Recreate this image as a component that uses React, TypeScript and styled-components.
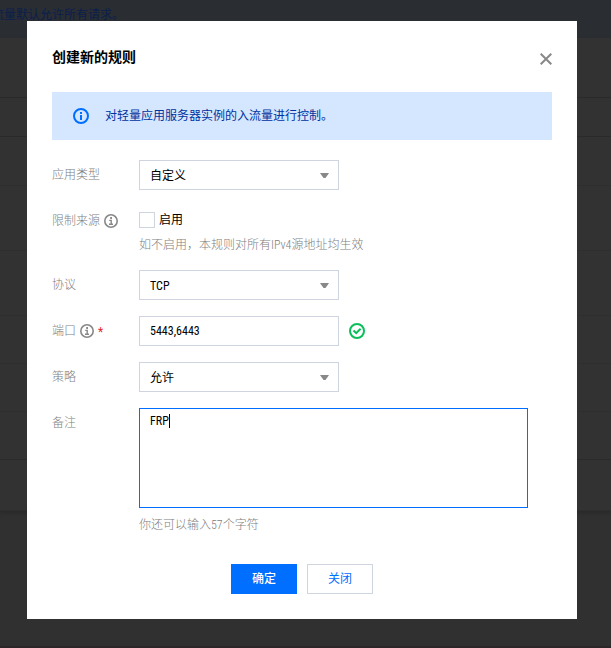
import React, { useState } from "react";
import styled, { createGlobalStyle } from "styled-components";

const GlobalStyle = createGlobalStyle`
  *, *::before, *::after { box-sizing: border-box; }
  body {
    margin: 0;
    background: #303030;
    color: #000;
    font: 12px/20px "Roboto Condensed", "Noto Sans CJK SC", sans-serif;
  }
  button, input, select, textarea { font: inherit; color: inherit; margin: 0; }
`;

const Page = styled.div`
  position: relative;
  min-height: 100vh;
  overflow: hidden;
  display: flex;
  flex-direction: column;
`;

const PageNotice = styled.div`
  height: 38px;
  padding-top: 5px;
  background: #2a2e33;
  color: #0b1e4c;
  white-space: nowrap;
`;

const NoticeText = styled.span`
  margin-left: -8px;
`;

const RuleList = styled.div`
  background: #323232;
  box-shadow: 0 2px 3px #292929;
`;

const RuleRow = styled.div<{ $height: number; $strong?: boolean }>`
  height: ${(p) => p.$height}px;
  border-bottom: 1px solid ${(p) => (p.$strong ? "#292a2b" : "#2e2e2f")};
`;

const BottomBar = styled.div`
  margin-top: auto;
  height: 2px;
  background: #2d2629;
`;

const Overlay = styled.div`
  position: absolute;
  inset: 0;
  display: flex;
  justify-content: center;
  align-items: flex-start;
  padding: 21px 34px 21px 27px;
`;

const Dialog = styled.form`
  flex: 1;
  max-width: 550px;
  padding: 25px;
  background: #fff;
`;

const Header = styled.header`
  display: flex;
  justify-content: space-between;
  align-items: flex-start;
  height: 46px;
`;

const Title = styled.h1`
  margin: 0;
  font-size: 14px;
  line-height: 22px;
  font-weight: 700;
`;

const CloseButton = styled.button`
  display: flex;
  margin-top: 7px;
  padding: 0;
  border: 0;
  background: none;
  color: #888;
  cursor: pointer;
`;

const Notice = styled.div`
  display: flex;
  align-items: center;
  gap: 16px;
  min-height: 48px;
  padding: 0 21px;
  margin-bottom: 20px;
  background: #d5e7ff;
  color: #0032a0;
`;

const Icon = styled.svg`
  flex: none;
  display: block;
`;

const Fields = styled.div`
  display: grid;
  grid-template-columns: 87px minmax(0, 1fr);
  row-gap: 16px;
`;

const FieldLabel = styled.label`
  display: flex;
  align-items: center;
  gap: 4px;
  height: 30px;
  color: #808080;
  font-weight: 300;
`;

const Required = styled.span`
  height: 18px;
  color: #e1252c;
  font-weight: 400;
`;

const Control = styled.div`
  display: flex;
  align-items: center;
  gap: 10px;
`;

const SelectBox = styled.div`
  position: relative;
  width: 200px;
`;

const Select = styled.select`
  display: block;
  appearance: none;
  width: 100%;
  height: 30px;
  padding: 2px 30px 0 10px;
  border: 1px solid #cfd5de;
  border-radius: 0;
  background: #fff;
`;

const Arrow = styled.svg`
  position: absolute;
  right: 10px;
  top: 13px;
  pointer-events: none;
`;

const TextInput = styled.input`
  width: 200px;
  height: 30px;
  padding: 0 10px;
  border: 1px solid #cfd5de;
  border-radius: 0;
`;

const Stack = styled.div``;

const CheckLabel = styled.label`
  display: flex;
  align-items: center;
  gap: 4px;
  height: 28px;
`;

const Checkbox = styled.input`
  appearance: none;
  width: 16px;
  height: 16px;
  border: 1px solid #cfd5de;
  background: #fff;
  &:checked { background: #006eff; }
`;

const Hint = styled.p`
  margin: 0;
  padding-top: 2px;
  line-height: 18px;
  color: #808080;
  font-weight: 300;
`;

const NoteBox = styled.div`
  position: relative;
  max-width: 389px;
  margin-bottom: 6px;
`;

const NoteArea = styled.textarea`
  display: block;
  width: 100%;
  height: 100px;
  padding: 2px 10px;
  border: 1px solid #006eff;
  border-radius: 0;
  outline: none;
  resize: none;
  caret-color: transparent;
`;

const Caret = styled.span`
  position: absolute;
  left: 30px;
  top: 6px;
  width: 1px;
  height: 14px;
  background: #000;
`;

const Footer = styled.footer`
  display: flex;
  justify-content: center;
  gap: 10px;
  margin-top: 30px;
`;

const Button = styled.button<{ $primary?: boolean }>`
  min-width: 66px;
  height: 30px;
  padding: 0 20px;
  border: 1px solid ${(p) => (p.$primary ? "#006eff" : "#cfd5de")};
  background: ${(p) => (p.$primary ? "#006eff" : "#fff")};
  color: ${(p) => (p.$primary ? "#fff" : "#006eff")};
  font-weight: ${(p) => (p.$primary ? 500 : 400)};
  cursor: pointer;
`;

const rows = [
  { height: 60, strong: true },
  { height: 39, strong: true },
  { height: 49 },
  { height: 65 },
  { height: 65 },
  { height: 48 },
  { height: 48 },
  { height: 48, strong: true },
  { height: 51 },
];

function InfoIcon() {
  return (
    <Icon width="14" height="14" viewBox="0 0 14 14" fill="none" stroke="#888" strokeWidth="1.6" aria-hidden="true">
      <circle cx="7" cy="7" r="6.2" />
      <path d="M5.2 6.4H7.2V10.2M5 10.2H9" strokeWidth="1.4" />
      <path d="M6.2 4H8" strokeWidth="1.8" />
    </Icon>
  );
}

function NoticeIcon() {
  return (
    <Icon width="16" height="16" viewBox="0 0 16 16" fill="none" stroke="#006eff" strokeWidth="2" aria-hidden="true">
      <circle cx="8" cy="8" r="7" />
      <path d="M8 7V12M8 4V6" />
    </Icon>
  );
}

function Dropdown({ id, options }: { id: string; options: string[] }) {
  return (
    <SelectBox>
      <Select id={id} defaultValue={options[0]}>
        {options.map((o) => (
          <option key={o}>{o}</option>
        ))}
      </Select>
      <Arrow width="9" height="5" viewBox="0 0 9 5" aria-hidden="true">
        <path d="M0 0H9L5.5 5H3.5Z" fill="#888" />
      </Arrow>
    </SelectBox>
  );
}

export default function App() {
  const [note, setNote] = useState("FRP");
  return (
    <>
      <GlobalStyle />
      <Page>
        <PageNotice>
          <NoticeText>流量默认允许所有请求。</NoticeText>
        </PageNotice>
        <RuleList>
          {rows.map((r, i) => (
            <RuleRow key={i} $height={r.height} $strong={r.strong} />
          ))}
        </RuleList>
        <BottomBar />
        <Overlay>
          <Dialog role="dialog" aria-labelledby="title" onSubmit={(e) => e.preventDefault()}>
            <Header>
              <Title id="title">创建新的规则</Title>
              <CloseButton type="button" aria-label="关闭">
                <Icon width="12" height="12" viewBox="0 0 12 12" fill="none" stroke="currentColor" strokeWidth="2">
                  <path d="M0.7 0.7L11.3 11.3M11.3 0.7L0.7 11.3" />
                </Icon>
              </CloseButton>
            </Header>
            <Notice>
              <NoticeIcon />
              <span>对轻量应用服务器实例的入流量进行控制。</span>
            </Notice>
            <Fields>
              <FieldLabel htmlFor="app">应用类型</FieldLabel>
              <Dropdown id="app" options={["自定义"]} />

              <FieldLabel htmlFor="limit">
                限制来源
                <InfoIcon />
              </FieldLabel>
              <Stack>
                <CheckLabel>
                  <Checkbox id="limit" type="checkbox" />
                  启用
                </CheckLabel>
                <Hint>如不启用，本规则对所有IPv4源地址均生效</Hint>
              </Stack>

              <FieldLabel htmlFor="protocol">协议</FieldLabel>
              <Dropdown id="protocol" options={["TCP", "UDP"]} />

              <FieldLabel htmlFor="port">
                端口
                <InfoIcon />
                <Required>*</Required>
              </FieldLabel>
              <Control>
                <TextInput id="port" type="text" defaultValue="5443,6443" />
                <Icon width="16" height="16" viewBox="0 0 16 16" fill="none" stroke="#0abf5b" strokeWidth="2" aria-hidden="true">
                  <circle cx="8" cy="8" r="7" />
                  <path d="M4.5 7.5L7.2 10.2L11.6 5.8" />
                </Icon>
              </Control>

              <FieldLabel htmlFor="policy">策略</FieldLabel>
              <Dropdown id="policy" options={["允许", "拒绝"]} />

              <FieldLabel htmlFor="note">备注</FieldLabel>
              <Stack>
                <NoteBox>
                  <NoteArea id="note" value={note} onChange={(e) => setNote(e.target.value)} />
                  {note === "FRP" && <Caret />}
                </NoteBox>
                <Hint>你还可以输入{60 - note.length}个字符</Hint>
              </Stack>
            </Fields>
            <Footer>
              <Button type="submit" $primary>确定</Button>
              <Button type="button">关闭</Button>
            </Footer>
          </Dialog>
        </Overlay>
      </Page>
    </>
  );
}
